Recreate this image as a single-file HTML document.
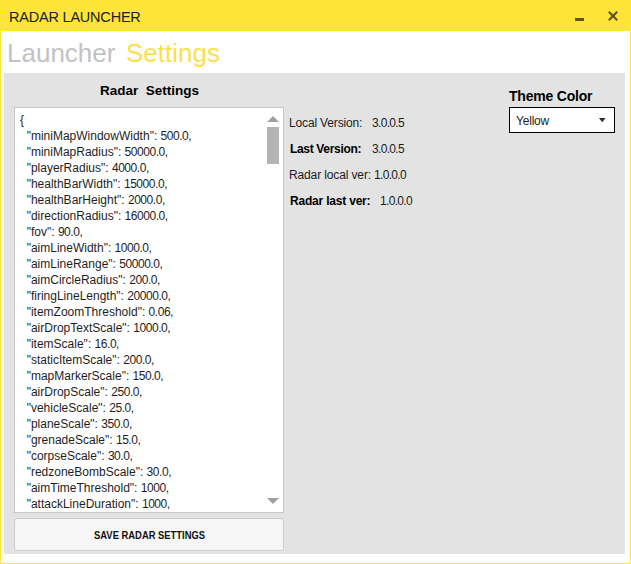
<!DOCTYPE html>
<html><head><meta charset="utf-8">
<style>
*{margin:0;padding:0;box-sizing:border-box}
html,body{width:631px;height:564px;overflow:hidden;background:#fff;font-family:"Liberation Sans",sans-serif}
.abs{position:absolute;white-space:pre}
#win{position:absolute;left:0;top:0;width:631px;height:564px;background:#fff;border:1px solid #fee538;border-top:none}
#title{position:absolute;left:0;top:0;width:631px;height:31px;background:#fee538}
#panel{position:absolute;left:4px;top:73px;width:621px;height:481px;background:#e3e3e3}
#tb{position:absolute;left:14px;top:107px;width:270px;height:406px;background:#fff;border:1px solid #c8c8c8}
#btn{position:absolute;left:14px;top:518px;width:270px;height:33px;background:#f6f6f6;border:1px solid #cccccc;border-radius:3px}
#combo{position:absolute;left:509px;top:107px;width:106px;height:26px;background:#fff;border:1px solid #000}
.json{font-size:12px;color:#1e1e1e;line-height:16px}
.n{letter-spacing:-0.45px}
.lbl{font-size:12px;color:#1c1c1c}
.val{letter-spacing:-0.67px}
.b{font-weight:bold;color:#000}
</style></head><body>
<div id="win"></div>
<div id="title"></div>
<div class="abs" style="left:9px;top:8px;font-size:15.4px;letter-spacing:-0.2px;transform:scaleX(0.94);transform-origin:0 0;color:#222">RADAR LAUNCHER</div>
<div class="abs" style="left:575px;top:18px;width:9px;height:3px;background:#5e5318"></div>
<svg class="abs" style="left:608px;top:11px" width="10" height="10" viewBox="0 0 10 10"><path d="M0.8 0.8L9.2 9.2M9.2 0.8L0.8 9.2" stroke="#605519" stroke-width="2.1"/><rect x="3.5" y="3.5" width="3" height="3" fill="#605519"/></svg>
<div class="abs" style="left:7px;top:38px;font-size:26px;color:#c2c2c4">Launcher</div>
<div class="abs" style="left:126px;top:38px;font-size:26px;color:#fcdf4c">Settings</div>
<div id="panel"></div>
<div class="abs" style="left:100px;top:83px;font-size:13.5px;font-weight:bold;color:#000">Radar  Settings</div>
<div id="tb"></div>
<div class="abs json" style="left:20px;top:112px">{
  "miniMapWindowWidth": <span class="n">500.0,</span>
  "miniMapRadius": <span class="n">50000.0,</span>
  "playerRadius": <span class="n">4000.0,</span>
  "healthBarWidth": <span class="n">15000.0,</span>
  "healthBarHeight": <span class="n">2000.0,</span>
  "directionRadius": <span class="n">16000.0,</span>
  "fov": <span class="n">90.0,</span>
  "aimLineWidth": <span class="n">1000.0,</span>
  "aimLineRange": <span class="n">50000.0,</span>
  "aimCircleRadius": <span class="n">200.0,</span>
  "firingLineLength": <span class="n">20000.0,</span>
  "itemZoomThreshold": <span class="n">0.06,</span>
  "airDropTextScale": <span class="n">1000.0,</span>
  "itemScale": <span class="n">16.0,</span>
  "staticItemScale": <span class="n">200.0,</span>
  "mapMarkerScale": <span class="n">150.0,</span>
  "airDropScale": <span class="n">250.0,</span>
  "vehicleScale": <span class="n">25.0,</span>
  "planeScale": <span class="n">350.0,</span>
  "grenadeScale": <span class="n">15.0,</span>
  "corpseScale": <span class="n">30.0,</span>
  "redzoneBombScale": <span class="n">30.0,</span>
  "aimTimeThreshold": <span class="n">1000,</span>
  "attackLineDuration": <span class="n">1000,</span></div>
<svg class="abs" style="left:267px;top:116px" width="12" height="6"><path d="M0 6L6 0L12 6Z" fill="#a0a0a0"/></svg>
<div class="abs" style="left:267px;top:127px;width:12px;height:37px;background:#b4b4b4"></div>
<svg class="abs" style="left:267px;top:498px" width="12" height="6"><path d="M0 0L12 0L6 6Z" fill="#a0a0a0"/></svg>
<div id="btn"></div>
<div class="abs" style="left:94px;top:530px;font-size:10px;letter-spacing:0px;transform:scaleX(0.94);transform-origin:0 0;font-weight:bold;color:#111">SAVE RADAR SETTINGS</div>
<div class="abs lbl" style="left:289px;top:116px;letter-spacing:-0.15px">Local Version:</div>
<div class="abs lbl val" style="left:372px;top:116px">3.0.0.5</div>
<div class="abs lbl b" style="left:290px;top:142px;letter-spacing:-0.33px">Last Version:</div>
<div class="abs lbl val" style="left:372px;top:142px">3.0.0.5</div>
<div class="abs lbl" style="left:289px;top:168px;letter-spacing:-0.13px">Radar local ver:</div>
<div class="abs lbl val" style="left:374px;top:168px">1.0.0.0</div>
<div class="abs lbl b" style="left:290px;top:194px;letter-spacing:-0.2px">Radar last ver:</div>
<div class="abs lbl val" style="left:380px;top:194px">1.0.0.0</div>
<div class="abs" style="left:509px;top:88px;font-size:14px;letter-spacing:-0.2px;font-weight:bold;color:#000">Theme Color</div>
<div id="combo"></div>
<div class="abs" style="left:516px;top:114px;font-size:12px;letter-spacing:-0.2px;color:#222">Yellow</div>
<svg class="abs" style="left:599px;top:118px" width="7" height="5"><path d="M0 0L6.5 0L3.25 4.2Z" fill="#2a2a2a"/></svg>
</body></html>
